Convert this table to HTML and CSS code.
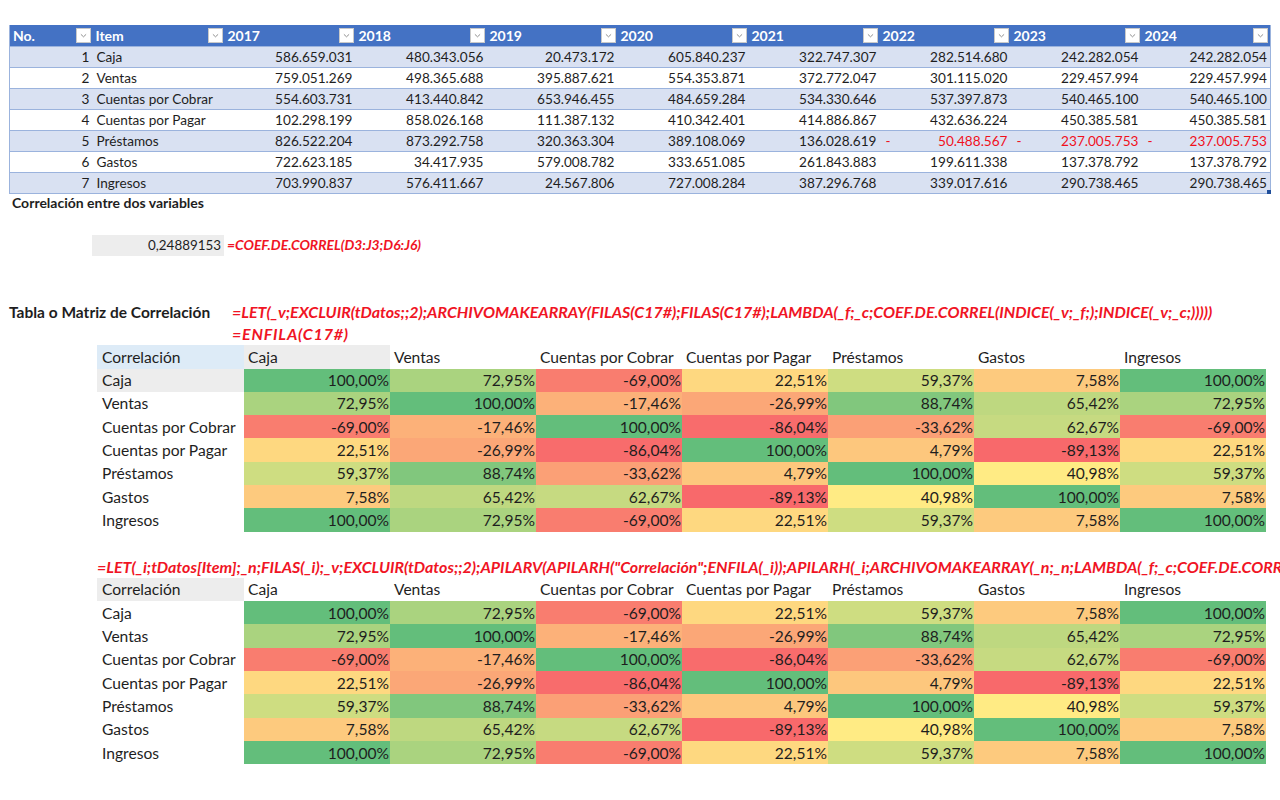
FILE: index.html
```html
<!DOCTYPE html>
<html lang="es">
<head>
<meta charset="utf-8">
<title>Correlación</title>
<link rel="stylesheet" href="styles.css">
</head>
<body>
<div class="page">
  <div class="data-wrap">
    <table class="data">
      <colgroup>
        <col class="w-no"><col class="w-item"><col class="w-yr"><col class="w-yr"><col class="w-yr"><col class="w-yr"><col class="w-yr"><col class="w-yr"><col class="w-yr"><col class="w-last">
      </colgroup>
      <thead>
        <tr>
          <th><div class="hcell"><span>No.</span><span class="dd"><svg viewBox="0 0 15 15"><path d="M4.5 6.2 L7.5 9 L10.5 6.2"/></svg></span></div></th>
          <th><div class="hcell"><span>Item</span><span class="dd"><svg viewBox="0 0 15 15"><path d="M4.5 6.2 L7.5 9 L10.5 6.2"/></svg></span></div></th>
          <th><div class="hcell"><span>2017</span><span class="dd"><svg viewBox="0 0 15 15"><path d="M4.5 6.2 L7.5 9 L10.5 6.2"/></svg></span></div></th>
          <th><div class="hcell"><span>2018</span><span class="dd"><svg viewBox="0 0 15 15"><path d="M4.5 6.2 L7.5 9 L10.5 6.2"/></svg></span></div></th>
          <th><div class="hcell"><span>2019</span><span class="dd"><svg viewBox="0 0 15 15"><path d="M4.5 6.2 L7.5 9 L10.5 6.2"/></svg></span></div></th>
          <th><div class="hcell"><span>2020</span><span class="dd"><svg viewBox="0 0 15 15"><path d="M4.5 6.2 L7.5 9 L10.5 6.2"/></svg></span></div></th>
          <th><div class="hcell"><span>2021</span><span class="dd"><svg viewBox="0 0 15 15"><path d="M4.5 6.2 L7.5 9 L10.5 6.2"/></svg></span></div></th>
          <th><div class="hcell"><span>2022</span><span class="dd"><svg viewBox="0 0 15 15"><path d="M4.5 6.2 L7.5 9 L10.5 6.2"/></svg></span></div></th>
          <th><div class="hcell"><span>2023</span><span class="dd"><svg viewBox="0 0 15 15"><path d="M4.5 6.2 L7.5 9 L10.5 6.2"/></svg></span></div></th>
          <th><div class="hcell"><span>2024</span><span class="dd"><svg viewBox="0 0 15 15"><path d="M4.5 6.2 L7.5 9 L10.5 6.2"/></svg></span></div></th>
        </tr>
      </thead>
      <tbody>
        <tr><td class="num">1</td><td>Caja</td><td class="num">586.659.031</td><td class="num">480.343.056</td><td class="num">20.473.172</td><td class="num">605.840.237</td><td class="num">322.747.307</td><td class="num">282.514.680</td><td class="num">242.282.054</td><td class="num">242.282.054</td></tr>
        <tr><td class="num">2</td><td>Ventas</td><td class="num">759.051.269</td><td class="num">498.365.688</td><td class="num">395.887.621</td><td class="num">554.353.871</td><td class="num">372.772.047</td><td class="num">301.115.020</td><td class="num">229.457.994</td><td class="num">229.457.994</td></tr>
        <tr><td class="num">3</td><td>Cuentas por Cobrar</td><td class="num">554.603.731</td><td class="num">413.440.842</td><td class="num">653.946.455</td><td class="num">484.659.284</td><td class="num">534.330.646</td><td class="num">537.397.873</td><td class="num">540.465.100</td><td class="num">540.465.100</td></tr>
        <tr><td class="num">4</td><td>Cuentas por Pagar</td><td class="num">102.298.199</td><td class="num">858.026.168</td><td class="num">111.387.132</td><td class="num">410.342.401</td><td class="num">414.886.867</td><td class="num">432.636.224</td><td class="num">450.385.581</td><td class="num">450.385.581</td></tr>
        <tr><td class="num">5</td><td>Préstamos</td><td class="num">826.522.204</td><td class="num">873.292.758</td><td class="num">320.363.304</td><td class="num">389.108.069</td><td class="num">136.028.619</td><td class="neg"><div class="negcell"><span>-</span><span>50.488.567</span></div></td><td class="neg"><div class="negcell"><span>-</span><span>237.005.753</span></div></td><td class="neg"><div class="negcell"><span>-</span><span>237.005.753</span></div></td></tr>
        <tr><td class="num">6</td><td>Gastos</td><td class="num">722.623.185</td><td class="num">34.417.935</td><td class="num">579.008.782</td><td class="num">333.651.085</td><td class="num">261.843.883</td><td class="num">199.611.338</td><td class="num">137.378.792</td><td class="num">137.378.792</td></tr>
        <tr><td class="num">7</td><td>Ingresos</td><td class="num">703.990.837</td><td class="num">576.411.667</td><td class="num">24.567.806</td><td class="num">727.008.284</td><td class="num">387.296.768</td><td class="num">339.017.616</td><td class="num">290.738.465</td><td class="num">290.738.465</td></tr>
      </tbody>
    </table>
    <span class="resize-handle"></span>
  </div>

  <div class="caption">Correlación entre dos variables</div>

  <div class="single">
    <div class="single-val">0,24889153</div>
    <div class="formula f-single">=COEF.DE.CORREL(D3:J3;D6:J6)</div>
  </div>

  <div class="matrix-title">
    <div class="title">Tabla o Matriz de Correlación</div>
    <div class="formulas">
      <div class="formula f-big">=LET(_v;EXCLUIR(tDatos;;2);ARCHIVOMAKEARRAY(FILAS(C17#);FILAS(C17#);LAMBDA(_f;_c;COEF.DE.CORREL(INDICE(_v;_f;);INDICE(_v;_c;)))))</div>
      <div class="formula f-big f-enfila">=ENFILA(C17#)</div>
    </div>
  </div>

  <table class="matrix m1">
    <colgroup><col class="w-lab"><col class="w-c"><col class="w-c"><col class="w-c"><col class="w-c"><col class="w-c"><col class="w-c"><col class="w-c"></colgroup>
    <tr class="mhead"><td class="corner-blue">Correlación</td><td class="hl-gray">Caja</td><td>Ventas</td><td>Cuentas por Cobrar</td><td>Cuentas por Pagar</td><td>Préstamos</td><td>Gastos</td><td>Ingresos</td></tr>
    <tr><td class="lab hl-gray">Caja</td><td class="v p100">100,00%</td><td class="v p7295">72,95%</td><td class="v n6900">-69,00%</td><td class="v p2251">22,51%</td><td class="v p5937">59,37%</td><td class="v p758">7,58%</td><td class="v p100">100,00%</td></tr>
    <tr><td class="lab">Ventas</td><td class="v p7295">72,95%</td><td class="v p100">100,00%</td><td class="v n1746">-17,46%</td><td class="v n2699">-26,99%</td><td class="v p8874">88,74%</td><td class="v p6542">65,42%</td><td class="v p7295">72,95%</td></tr>
    <tr><td class="lab">Cuentas por Cobrar</td><td class="v n6900">-69,00%</td><td class="v n1746">-17,46%</td><td class="v p100">100,00%</td><td class="v n8604">-86,04%</td><td class="v n3362">-33,62%</td><td class="v p6267">62,67%</td><td class="v n6900">-69,00%</td></tr>
    <tr><td class="lab">Cuentas por Pagar</td><td class="v p2251">22,51%</td><td class="v n2699">-26,99%</td><td class="v n8604">-86,04%</td><td class="v p100">100,00%</td><td class="v p479">4,79%</td><td class="v n8913">-89,13%</td><td class="v p2251">22,51%</td></tr>
    <tr><td class="lab">Préstamos</td><td class="v p5937">59,37%</td><td class="v p8874">88,74%</td><td class="v n3362">-33,62%</td><td class="v p479">4,79%</td><td class="v p100">100,00%</td><td class="v p4098">40,98%</td><td class="v p5937">59,37%</td></tr>
    <tr><td class="lab">Gastos</td><td class="v p758">7,58%</td><td class="v p6542">65,42%</td><td class="v p6267">62,67%</td><td class="v n8913">-89,13%</td><td class="v p4098">40,98%</td><td class="v p100">100,00%</td><td class="v p758">7,58%</td></tr>
    <tr><td class="lab">Ingresos</td><td class="v p100">100,00%</td><td class="v p7295">72,95%</td><td class="v n6900">-69,00%</td><td class="v p2251">22,51%</td><td class="v p5937">59,37%</td><td class="v p758">7,58%</td><td class="v p100">100,00%</td></tr>
  </table>

  <div class="formula-line">
    <div class="formula f-wide">=LET(_i;tDatos[Item];_n;FILAS(_i);_v;EXCLUIR(tDatos;;2);APILARV(APILARH("Correlación";ENFILA(_i));APILARH(_i;ARCHIVOMAKEARRAY(_n;_n;LAMBDA(_f;_c;COEF.DE.CORREL(INDICE(_v;_f;);INDICE(_v;_c;))))))</div>
  </div>

  <table class="matrix m2">
    <colgroup><col class="w-lab"><col class="w-c"><col class="w-c"><col class="w-c"><col class="w-c"><col class="w-c"><col class="w-c"><col class="w-c"></colgroup>
    <tr class="mhead"><td class="hl-gray">Correlación</td><td>Caja</td><td>Ventas</td><td>Cuentas por Cobrar</td><td>Cuentas por Pagar</td><td>Préstamos</td><td>Gastos</td><td>Ingresos</td></tr>
    <tr><td class="lab">Caja</td><td class="v p100">100,00%</td><td class="v p7295">72,95%</td><td class="v n6900">-69,00%</td><td class="v p2251">22,51%</td><td class="v p5937">59,37%</td><td class="v p758">7,58%</td><td class="v p100">100,00%</td></tr>
    <tr><td class="lab">Ventas</td><td class="v p7295">72,95%</td><td class="v p100">100,00%</td><td class="v n1746">-17,46%</td><td class="v n2699">-26,99%</td><td class="v p8874">88,74%</td><td class="v p6542">65,42%</td><td class="v p7295">72,95%</td></tr>
    <tr><td class="lab">Cuentas por Cobrar</td><td class="v n6900">-69,00%</td><td class="v n1746">-17,46%</td><td class="v p100">100,00%</td><td class="v n8604">-86,04%</td><td class="v n3362">-33,62%</td><td class="v p6267">62,67%</td><td class="v n6900">-69,00%</td></tr>
    <tr><td class="lab">Cuentas por Pagar</td><td class="v p2251">22,51%</td><td class="v n2699">-26,99%</td><td class="v n8604">-86,04%</td><td class="v p100">100,00%</td><td class="v p479">4,79%</td><td class="v n8913">-89,13%</td><td class="v p2251">22,51%</td></tr>
    <tr><td class="lab">Préstamos</td><td class="v p5937">59,37%</td><td class="v p8874">88,74%</td><td class="v n3362">-33,62%</td><td class="v p479">4,79%</td><td class="v p100">100,00%</td><td class="v p4098">40,98%</td><td class="v p5937">59,37%</td></tr>
    <tr><td class="lab">Gastos</td><td class="v p758">7,58%</td><td class="v p6542">65,42%</td><td class="v p6267">62,67%</td><td class="v n8913">-89,13%</td><td class="v p4098">40,98%</td><td class="v p100">100,00%</td><td class="v p758">7,58%</td></tr>
    <tr><td class="lab">Ingresos</td><td class="v p100">100,00%</td><td class="v p7295">72,95%</td><td class="v n6900">-69,00%</td><td class="v p2251">22,51%</td><td class="v p5937">59,37%</td><td class="v p758">7,58%</td><td class="v p100">100,00%</td></tr>
  </table>
</div>
</body>
</html>
```

FILE: styles.css
```css
html, body {
  margin: 0;
  padding: 0;
  background: #ffffff;
}
body {
  width: 1280px;
  height: 800px;
  overflow: hidden;
  font-family: "Lato", "Open Sans", sans-serif;
  color: #1e1e1e;
}
.page {
  padding: 25px 0 0 9px;
}

/* ---------- data table ---------- */
.data-wrap {
  position: relative;
  width: 1261px;
}
.data {
  border-collapse: collapse;
  table-layout: fixed;
  width: 1261px;
  font-size: 13.6px;
  border-left: 1px solid #9bb3dd;
  border-right: 1px solid #9bb3dd;
}
.w-no { width: 83px; }
.w-item { width: 132px; }
.w-yr { width: 131px; }
.w-last { width: 129px; }
.data th {
  background: #4472c4;
  color: #ffffff;
  font-weight: 700;
  text-align: left;
  height: 21px;
  padding: 0 2px 0 3px;
  font-size: 14px;
}
.hcell {
  display: flex;
  justify-content: space-between;
  align-items: center;
}
.dd {
  width: 15px;
  height: 15px;
  box-sizing: border-box;
  background: #ffffff;
  border: 1px solid #c9c9c9;
  display: flex;
}
.dd svg {
  width: 13px;
  height: 13px;
  fill: none;
  stroke: #8a8a8a;
  stroke-width: 1.1;
}
.data td {
  height: 20px;
  padding: 0 3px 0 4px;
  border-top: 1px solid #9bb3dd;
  white-space: nowrap;
  overflow: hidden;
}
.data tbody tr:nth-child(odd) td {
  background: #d9e1f2;
}
.data tbody tr:last-child td {
  border-bottom: 1px solid #9bb3dd;
}
.data td.num {
  text-align: right;
}
.data td.neg {
  color: #f0101c;
}
.negcell {
  display: flex;
  justify-content: space-between;
  padding-left: 2px;
}
.resize-handle {
  position: absolute;
  right: -1px;
  bottom: 0;
  width: 4px;
  height: 4px;
  background: #1f4e9a;
}

/* ---------- captions ---------- */
.caption {
  font-weight: 700;
  font-size: 14px;
  margin: 0 0 0 3px;
  line-height: 17px;
}
.single {
  display: flex;
  align-items: center;
  margin: 23px 0 0 83px;
}
.single-val {
  width: 132px;
  height: 21px;
  line-height: 21px;
  box-sizing: border-box;
  padding-right: 3px;
  background: #ededed;
  text-align: right;
  font-size: 13.4px;
}
.formula {
  color: #f01424;
  font-weight: 700;
  font-style: italic;
  white-space: nowrap;
  line-height: 22px;
}
.f-single {
  font-size: 13.9px;
  margin-left: 3px;
}
.f-big {
  font-size: 16px;
}
.f-enfila {
  letter-spacing: 0.8px;
}
.matrix-title {
  display: flex;
  margin-top: 45px;
}
.title {
  width: 223px;
  flex: none;
  font-weight: 700;
  font-size: 15.5px;
  line-height: 22px;
}

/* ---------- matrices ---------- */
.matrix {
  border-collapse: collapse;
  table-layout: fixed;
  width: 1169px;
  margin-left: 88px;
  font-size: 15.6px;
}
.w-lab { width: 147px; }
.w-c { width: 146px; }
.matrix td {
  height: 23.3px;
  padding: 0 1px 0 5px;
  white-space: nowrap;
  overflow: hidden;
  box-sizing: border-box;
}
.matrix .mhead td {
  height: 23.5px;
  padding-left: 4px;
}
.matrix .mhead td:first-child {
  padding-left: 5px;
}
.matrix td.v {
  text-align: right;
}
.corner-blue { background: #ddebf7; }
.hl-gray { background: #ededed; }
.formula-line {
  margin: 24px 0 0 88px;
  width: 1183px;
  overflow: hidden;
}
.f-wide {
  font-size: 16px;
}

/* colour scale (red - yellow - green) */
.n8913 { background: #f8696b; }
.n8604 { background: #f86c6c; }
.n6900 { background: #f97d6f; }
.n3362 { background: #fba076; }
.n2699 { background: #fba777; }
.n1746 { background: #fcb179; }
.p479  { background: #fdc77d; }
.p758  { background: #fdca7e; }
.p2251 { background: #fed880; }
.p4098 { background: #ffeb84; }
.p5937 { background: #cedd81; }
.p6267 { background: #c6da81; }
.p6542 { background: #bed880; }
.p7295 { background: #aad37f; }
.p8874 { background: #81c77d; }
.p100  { background: #63be7b; }
```
